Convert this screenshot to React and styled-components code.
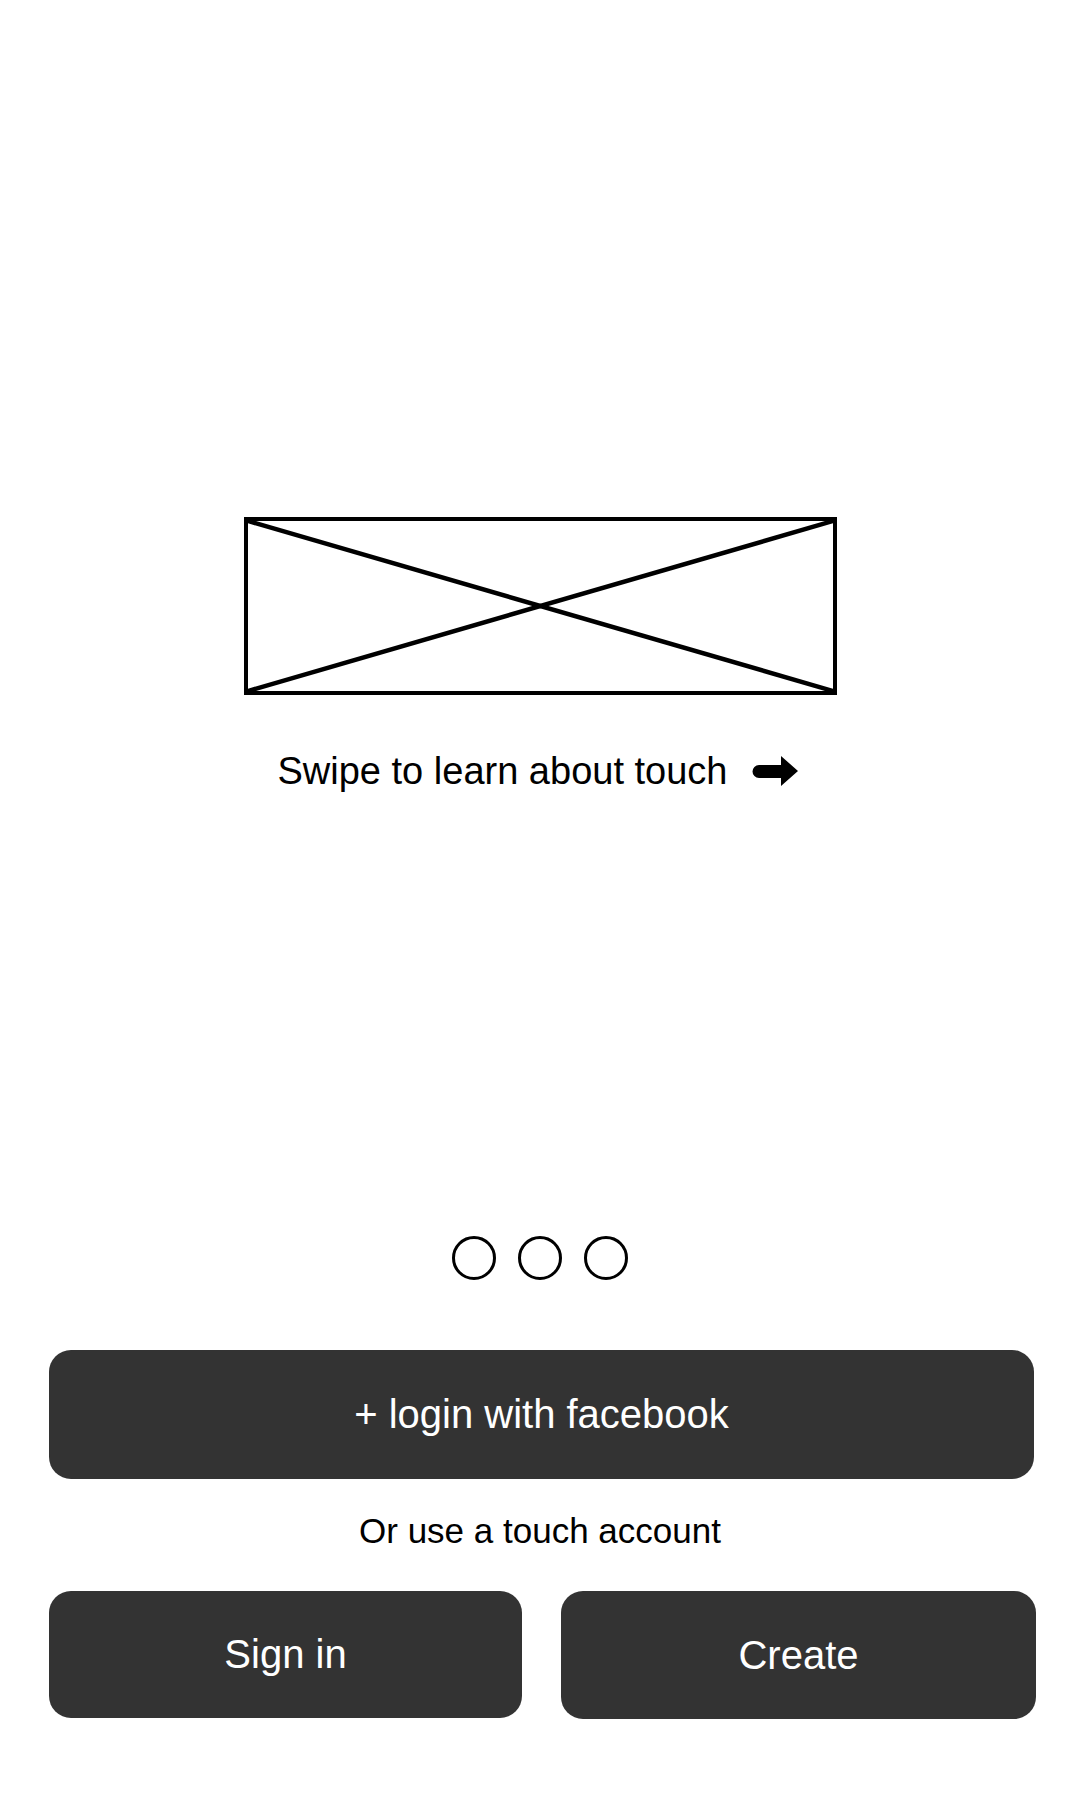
import React from "react";
import styled, { createGlobalStyle } from "styled-components";

const GlobalStyle = createGlobalStyle`
  * { box-sizing: border-box; }
  html, body { margin: 0; padding: 0; background: #ffffff; }
  body { font-family: "Liberation Sans", Arial, sans-serif; color: #000; }
`;

const Screen = styled.main`
  width: 1080px;
  min-height: 1800px;
  display: flex;
  flex-direction: column;
  align-items: center;
  padding: 517px 48px 0;
`;

const Placeholder = styled.div`
  width: 593px;
  height: 178px;
  border: 4px solid #000;
  display: flex;
  svg { display: block; width: 100%; height: 100%; }
`;

const Caption = styled.div`
  margin-top: 54px;
  display: flex;
  align-items: center;
  gap: 25px;
  font-size: 38px;
  line-height: 44px;
  margin-left: -4px;
`;

const Dots = styled.div`
  margin-top: 443px;
  display: flex;
  gap: 22px;
`;

const Dot = styled.span`
  width: 44px;
  height: 44px;
  border-radius: 50%;
  border: 3px solid #000;
  background: ${(p) => (p.$active ? "#000" : "transparent")};
`;

const Button = styled.button`
  border: none;
  margin: 0;
  background: #333333;
  color: #ffffff;
  font-family: "Liberation Sans", Arial, sans-serif;
  font-size: ${(p) => p.$size || 40}px;
  border-radius: 22px;
  height: ${(p) => p.$height || 127}px;
  width: 100%;
  display: flex;
  align-items: center;
  justify-content: center;
  padding: 0;
`;

const WideButton = styled(Button)`
  margin-top: 70px;
  width: 985px;
  margin-left: 3px;
`;

const OrText = styled.p`
  margin: 32px 0 0;
  font-size: 35px;
  line-height: 40px;
`;

const ButtonRow = styled.div`
  margin-top: 40px;
  width: 987px;
  display: grid;
  grid-template-columns: 473px 475px;
  column-gap: 39px;
  margin-left: 5px;
`;

function Arrow() {
  return (
    <svg width="46" height="30" viewBox="0 0 46 30" aria-hidden="true">
      <path d="M7 9 H29 V0 L46 15 L29 30 V22 H7 A6.5 6.5 0 0 1 7 9 Z" fill="#000" />
    </svg>
  );
}

export default function App() {
  return (
    <>
      <GlobalStyle />
      <Screen>
        <Placeholder>
          <svg viewBox="0 0 100 100" preserveAspectRatio="none" aria-hidden="true">
            <line x1="0" y1="0" x2="100" y2="100" stroke="#000" strokeWidth="4.5" vectorEffect="non-scaling-stroke" />
            <line x1="100" y1="0" x2="0" y2="100" stroke="#000" strokeWidth="4.5" vectorEffect="non-scaling-stroke" />
          </svg>
        </Placeholder>
        <Caption>
          <span>Swipe to learn about touch</span>
          <Arrow />
        </Caption>
        <Dots>
          <Dot />
          <Dot />
          <Dot />
        </Dots>
        <WideButton $height={129}>+ login with facebook</WideButton>
        <OrText>Or use a touch account</OrText>
        <ButtonRow>
          <Button>Sign in</Button>
          <Button $height={128}>Create</Button>
        </ButtonRow>
      </Screen>
    </>
  );
}
